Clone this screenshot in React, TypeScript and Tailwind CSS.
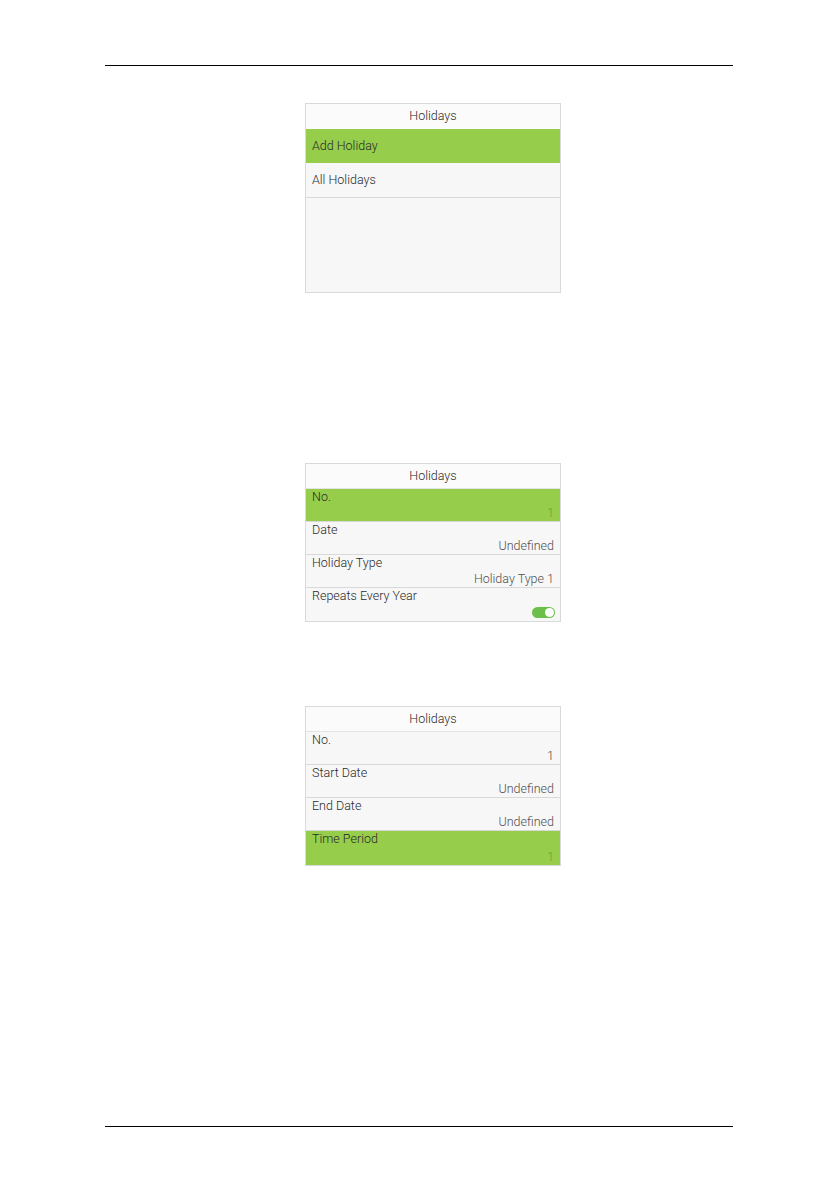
import React from "react";

const F = { fontFamily: "Roboto, 'Liberation Sans', sans-serif" };

function Header() {
  return (
    <div className="h-[25px] flex items-center justify-center bg-[#fbfbfb] border-b border-[#e4e4e4] text-[12.5px] text-[#2a2a2a]">
      Holidays
    </div>
  );
}

function Row({ label, value, active, toggle, last, tall }: { label: string; value?: string; active?: boolean; toggle?: boolean; last?: boolean; tall?: boolean }) {
  return (
    <div
      className={
        (tall ? "h-[34px] " : "h-[33px] ") +
        "flex flex-col justify-between px-[6px] pt-[1px] pb-[1px] " +
        (active ? "bg-[#96cd4b] " : "bg-[#f7f7f7] ") +
        (last ? "" : "border-b border-[#d9d9d9]")
      }
    >
      <div className="text-[12.5px] leading-[14px] text-[#2a2a2a]">{label}</div>
      <div className="flex justify-end">
        {toggle ? (
          <div className="w-[23px] h-[11px] mr-[-1px] rounded-full bg-[#6cc04a] flex items-center justify-end pr-[1px] mb-[2px]">
            <div className="w-[9px] h-[9px] rounded-full bg-white" />
          </div>
        ) : (
          <div className={"text-[12.5px] leading-[14px] " + (active ? "text-[#6f9a3a]" : "text-[#505050]")}>{value}</div>
        )}
      </div>
    </div>
  );
}

export default function App() {
  return (
    <div className="w-[839px] h-[1190px] bg-white flex flex-col font-light" style={F}>
      <div className="mt-[65px] ml-[105px] w-[628px] h-px bg-black" />

      <div className="mt-[37px] ml-[305px] w-[256px] h-[190px] border border-[#d9d9d9] bg-[#f7f7f7] flex flex-col">
        <div className="h-[25px] flex items-center justify-center bg-[#fbfbfb] text-[12.5px] text-[#2a2a2a]">Holidays</div>
        <div className="h-[34px] flex items-center px-[6px] bg-[#96cd4b] text-[12.5px] text-[#2a2a2a]">Add Holiday</div>
        <div className="h-[35px] flex items-center px-[6px] border-b border-[#d9d9d9] text-[12.5px] text-[#2a2a2a]">All Holidays</div>
      </div>

      <div className="mt-[170px] ml-[305px] w-[256px] border border-[#d9d9d9] bg-[#f7f7f7] flex flex-col">
        <Header />
        <Row label="No." value="1" active />
        <Row label="Date" value="Undefined" />
        <Row label="Holiday Type" value="Holiday Type 1" />
        <Row label="Repeats Every Year" toggle last />
      </div>

      <div className="mt-[84px] ml-[305px] w-[256px] border border-[#d9d9d9] bg-[#f7f7f7] flex flex-col">
        <Header />
        <Row label="No." value="1" />
        <Row label="Start Date" value="Undefined" />
        <Row label="End Date" value="Undefined" />
        <Row label="Time Period" value="1" active last tall />
      </div>

      <div className="mt-[260px] ml-[105px] w-[628px] h-px bg-black" />
    </div>
  );
}
